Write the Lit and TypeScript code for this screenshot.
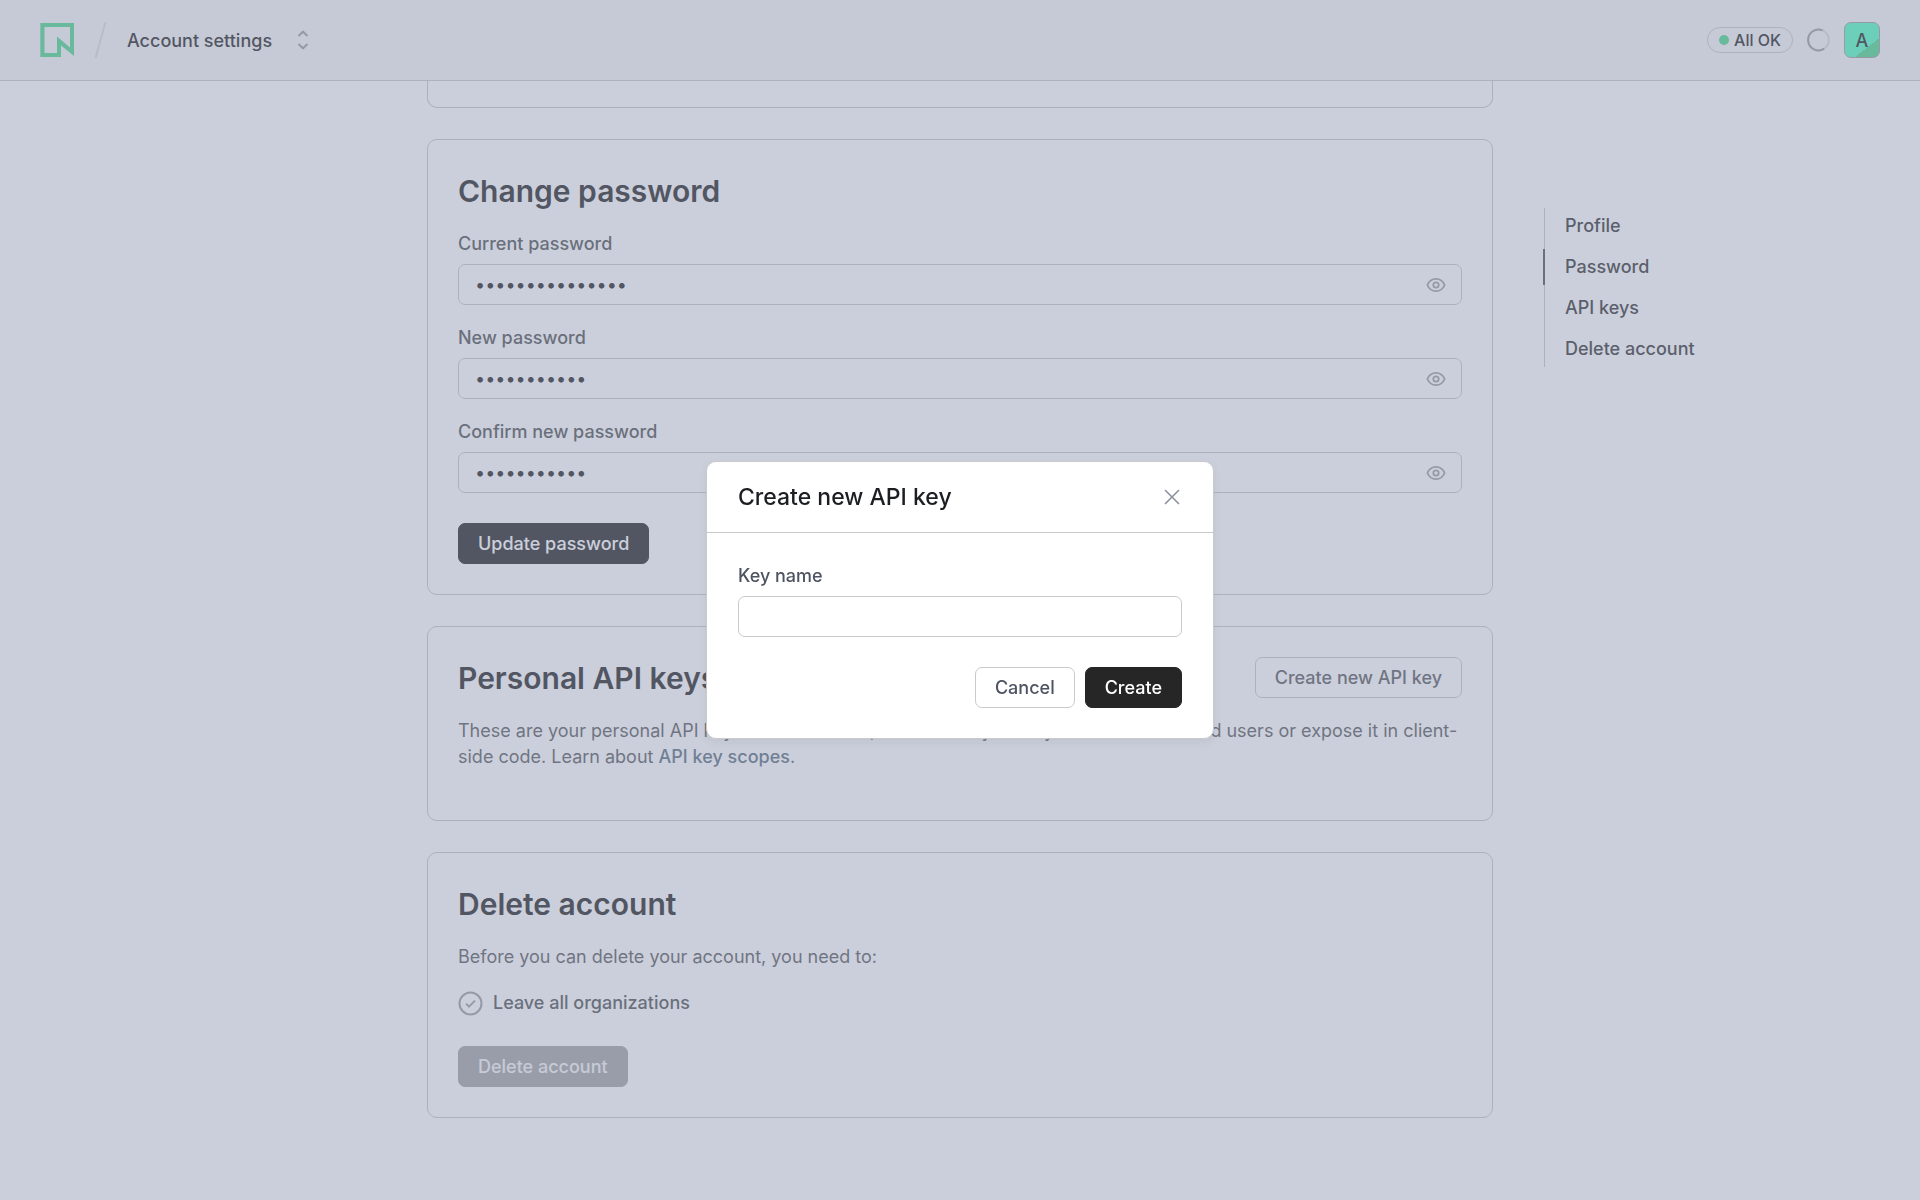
import { LitElement, html, css, svg } from "lit";
import { customElement, property, state } from "lit/decorators.js";
import { classMap } from "lit/directives/class-map.js";

const eyeIcon = html`
  <svg viewBox="0 0 20 20" width="20" height="20" fill="none" stroke="currentColor" stroke-width="1.8" aria-hidden="true">
    ${svg`<path d="M1.4 10C3 6.2 6.1 3.9 10 3.9S17 6.2 18.6 10C17 13.8 13.9 16.1 10 16.1S3 13.8 1.4 10Z" stroke-linejoin="round"/>
    <circle cx="10" cy="10" r="2.7"/>`}
  </svg>
`;

const controls = css`
  * {
    box-sizing: border-box;
  }
  .button {
    height: 41px;
    padding: 0 19px;
    border: 1px solid transparent;
    border-radius: 7px;
    font: inherit;
    font-weight: 500;
    white-space: nowrap;
    cursor: pointer;
  }
  .button.primary {
    background: #262626;
    border-color: #262626;
    color: #fff;
  }
  .button.outline {
    background: #fff;
    border-color: #cacacb;
    color: #4d5361;
  }
  .button:disabled {
    background: #a5a5a5;
    border-color: #a5a5a5;
    color: #f6f6f6;
    cursor: default;
  }
  .field {
    display: flex;
    flex-direction: column;
    gap: 8px;
  }
  .label {
    font-weight: 500;
    line-height: 25px;
    align-self: flex-start;
  }
  .input {
    width: 100%;
    height: 41px;
    padding: 0 16px;
    border: 1px solid #cacacb;
    border-radius: 7px;
    background: #fff;
    color: #262626;
    font: inherit;
    outline: none;
  }
`;

@customElement("password-field")
class PasswordField extends LitElement {
  @property() label = "";
  @property() value = "";
  @state() private shown = false;

  static styles = [
    controls,
    css`
      :host {
        display: block;
      }
      .label {
        color: #525355;
      }
      .box {
        display: grid;
        align-items: center;
      }
      .box > * {
        grid-area: 1 / 1;
      }
      .input {
        padding-right: 48px;
      }
      .reveal {
        justify-self: end;
        display: flex;
        margin-right: 16px;
        padding: 0;
        border: 0;
        background: none;
        color: #a0a0a0;
        cursor: pointer;
      }
    `,
  ];

  render() {
    return html`
      <div class="field">
        <label class="label" for="password">${this.label}</label>
        <div class="box">
          <input class="input" id="password" type=${this.shown ? "text" : "password"} .value=${this.value} />
          <button class="reveal" type="button" aria-label="Show password" @click=${() => (this.shown = !this.shown)}>
            ${eyeIcon}
          </button>
        </div>
      </div>
    `;
  }
}

@customElement("top-bar")
class TopBar extends LitElement {
  static styles = css`
    :host {
      display: block;
    }
    * {
      box-sizing: border-box;
    }
    .bar {
      display: flex;
      align-items: center;
      justify-content: space-between;
      height: 81px;
      padding: 0 40px;
      background: #f7f7f7;
      border-bottom: 1px solid #cacacb;
    }
    .left,
    .right,
    .switcher,
    .status {
      display: flex;
      align-items: center;
    }
    .left {
      gap: 20px;
    }
    .logo {
      display: flex;
      color: #4fd78e;
    }
    .slash {
      color: #dddddf;
    }
    .switcher {
      gap: 25px;
      padding: 0;
      border: 0;
      background: none;
      color: #262626;
      font: inherit;
      font-weight: 500;
    }
    .chevrons {
      color: #a0a0a0;
    }
    .right {
      gap: 14px;
    }
    .status {
      gap: 5px;
      height: 26px;
      padding: 0 11px;
      border: 1px solid #cacacb;
      border-radius: 13px;
      color: #262626;
      font-size: 16px;
      font-weight: 500;
      text-decoration: none;
    }
    .dot {
      width: 10px;
      height: 10px;
      border-radius: 50%;
      background: #4fd78e;
    }
    .avatar {
      width: 36px;
      height: 36px;
      padding: 0;
      border: 1px solid #a0a0a2;
      border-radius: 7px;
      background: linear-gradient(142deg, #53ffc4 0 69%, #4fd78e 69%);
      color: #262626;
      font: inherit;
      font-weight: 500;
    }
  `;

  render() {
    return html`
      <header class="bar">
        <div class="left">
          <a class="logo" href="#" aria-label="Home">
            <svg viewBox="0 0 34 34" width="34" height="34" fill="currentColor" fill-rule="evenodd">
              <path d="M0.3 0H34V33L21 22.5V34H0.3ZM4.5 4V30H17V13.5L30 24.5V4Z" />
            </svg>
          </a>
          <svg class="slash" viewBox="0 0 13 38" width="13" height="38" stroke="currentColor" stroke-width="2" aria-hidden="true">
            <path d="M1.5 37L11.5 1" />
          </svg>
          <button class="switcher" type="button">
            Account settings
            <svg class="chevrons" viewBox="0 0 12 20" width="12" height="20" fill="none" stroke="currentColor" stroke-width="2" aria-hidden="true">
              <path d="M1.5 6L6 1.7L10.5 6M1.5 14L6 18.3L10.5 14" />
            </svg>
          </button>
        </div>
        <div class="right">
          <a class="status" href="#"><span class="dot"></span>All OK</a>
          <svg viewBox="0 0 23 24" width="23" height="24" fill="none" stroke-width="2" role="img" aria-label="Loading">
            <circle cx="11.5" cy="12" r="10.4" stroke="#dcdcde" />
            <path d="M15.6 2.4A10.4 10.4 0 1 0 17.2 20.7" stroke="#a0a0a0" />
          </svg>
          <button class="avatar" type="button">A</button>
        </div>
      </header>
    `;
  }
}

@customElement("section-nav")
class SectionNav extends LitElement {
  @state() private active = "Password";

  static styles = css`
    :host {
      display: block;
    }
    .list {
      display: flex;
      flex-direction: column;
      gap: 5px;
      margin: 0;
      padding: 0;
      list-style: none;
      border-left: 1px solid #cacacb;
    }
    .link {
      display: block;
      margin-left: -2px;
      padding-left: 20px;
      border-left: 2px solid transparent;
      line-height: 36px;
      color: #363636;
      font-weight: 500;
      text-decoration: none;
    }
    .link.active {
      border-left-color: #525355;
    }
  `;

  render() {
    return html`
      <nav aria-label="Sections">
        <ul class="list">
          ${["Profile", "Password", "API keys", "Delete account"].map(
            (name) => html`
              <li>
                <a
                  class=${classMap({ link: true, active: name === this.active })}
                  href="#"
                  @click=${(event: Event) => {
                    event.preventDefault();
                    this.active = name;
                  }}
                  >${name}</a
                >
              </li>
            `
          )}
        </ul>
      </nav>
    `;
  }
}

@customElement("create-key-dialog")
class CreateKeyDialog extends LitElement {
  static styles = [
    controls,
    css`
      :host {
        position: fixed;
        inset: 0;
        display: flex;
        align-items: center;
        justify-content: center;
        background: rgba(138, 147, 174, 0.443);
      }
      .dialog {
        position: static;
        width: 100%;
        max-width: 508px;
        margin: 0;
        padding: 0;
        border: 1px solid #cacacb;
        border-radius: 10px;
        background: #fff;
        color: #1c1e22;
        box-shadow: 0 4px 8px rgba(60, 66, 84, 0.08);
      }
      .head {
        display: flex;
        align-items: center;
        justify-content: space-between;
        height: 71px;
        padding: 0 31px;
        border-bottom: 1px solid #cacacb;
      }
      .title {
        margin: 0;
        font-size: 23px;
        font-weight: 500;
      }
      .close {
        display: flex;
        padding: 0;
        border: 0;
        background: none;
        color: #8d92a0;
        cursor: pointer;
      }
      .body {
        display: flex;
        flex-direction: column;
        gap: 30px;
        padding: 30px 31px;
      }
      .label {
        color: #4d5361;
      }
      .actions {
        display: flex;
        justify-content: flex-end;
        gap: 10px;
      }
    `,
  ];

  private close() {
    this.dispatchEvent(new CustomEvent("dismiss"));
  }

  render() {
    return html`
      <dialog class="dialog" open aria-labelledby="title">
        <header class="head">
          <h2 class="title" id="title">Create new API key</h2>
          <button class="close" type="button" aria-label="Close" @click=${this.close}>
            <svg viewBox="0 0 20 20" width="20" height="20" fill="none" stroke="currentColor" stroke-width="1.6">
              <path d="M3 3L17 17M17 3L3 17" />
            </svg>
          </button>
        </header>
        <form class="body" @submit=${(event: Event) => event.preventDefault()}>
          <div class="field">
            <label class="label" for="key-name">Key name</label>
            <input class="input" id="key-name" type="text" autocomplete="off" />
          </div>
          <div class="actions">
            <button class="button outline" type="button" @click=${this.close}>Cancel</button>
            <button class="button primary" type="submit">Create</button>
          </div>
        </form>
      </dialog>
    `;
  }
}

@customElement("app-root")
class AppRoot extends LitElement {
  @state() private dialogOpen = true;

  static styles = [
    controls,
    css`
      :host {
        display: block;
        min-height: 100vh;
        background: #fff;
        color: #262626;
        font-family: Inter, "Liberation Sans", sans-serif;
        font-size: 18px;
      }
      .page {
        display: grid;
        grid-template-columns: minmax(0, 1fr) minmax(0, 1066px) minmax(0, 1fr);
      }
      .content {
        grid-column: 2;
        display: flex;
        flex-direction: column;
        gap: 31px;
      }
      .card {
        padding: 30px;
        border: 1px solid #cacacb;
        border-radius: 10px;
      }
      .card.cut {
        height: 27px;
        padding: 0;
        border-top: 0;
        border-top-left-radius: 0;
        border-top-right-radius: 0;
      }
      .heading {
        display: flex;
        align-items: center;
        justify-content: space-between;
        height: 41px;
        margin-bottom: 20px;
      }
      .title {
        margin: 0;
        font-size: 30px;
        font-weight: 600;
      }
      .fields {
        display: flex;
        flex-direction: column;
        gap: 20px;
        margin-bottom: 30px;
      }
      .text {
        margin: 0 0 20px;
        line-height: 26px;
        color: #5c5d60;
      }
      .link {
        color: #5d6f80;
        font-weight: 500;
        text-decoration: none;
      }
      .card .outline {
        color: #5c5d60;
      }
      .steps {
        margin: 0 0 30px;
        padding: 0;
        list-style: none;
      }
      .step {
        display: flex;
        align-items: center;
        gap: 10px;
        line-height: 26px;
        color: #525355;
        font-weight: 500;
      }
      .check {
        color: #a0a0a0;
      }
      .nav {
        padding: 127px 0 0 51px;
      }
    `,
  ];

  render() {
    return html`
      <top-bar></top-bar>
      <div class="page">
        <main class="content">
          <section class="card cut" aria-label="Profile"></section>

          <section class="card">
            <div class="heading"><h1 class="title">Change password</h1></div>
            <div class="fields">
              <password-field label="Current password" value="correct-horse-1"></password-field>
              <password-field label="New password" value="new-horse-2"></password-field>
              <password-field label="Confirm new password" value="new-horse-2"></password-field>
            </div>
            <button class="button primary" type="button">Update password</button>
          </section>

          <section class="card">
            <div class="heading">
              <h1 class="title">Personal API keys</h1>
              <button class="button outline" type="button" @click=${() => (this.dialogOpen = true)}>Create new API key</button>
            </div>
            <p class="text">
              These are your personal API keys. As a reminder, don't share your keys with unauthorized users or expose it in
              client-side code. Learn about <a class="link" href="#">API key scopes</a>.
            </p>
          </section>

          <section class="card">
            <div class="heading"><h1 class="title">Delete account</h1></div>
            <p class="text">Before you can delete your account, you need to:</p>
            <ul class="steps">
              <li class="step">
                <svg class="check" viewBox="0 0 25 25" width="25" height="25" fill="none" stroke="currentColor" stroke-width="2" aria-hidden="true">
                  <circle cx="12.5" cy="12.5" r="11" />
                  <path d="M8 12.6L11 15.6L17 9.6" />
                </svg>
                Leave all organizations
              </li>
            </ul>
            <button class="button" type="button" disabled>Delete account</button>
          </section>
        </main>
        <section-nav class="nav"></section-nav>
      </div>
      ${this.dialogOpen ? html`<create-key-dialog @dismiss=${() => (this.dialogOpen = false)}></create-key-dialog>` : ""}
    `;
  }
}
